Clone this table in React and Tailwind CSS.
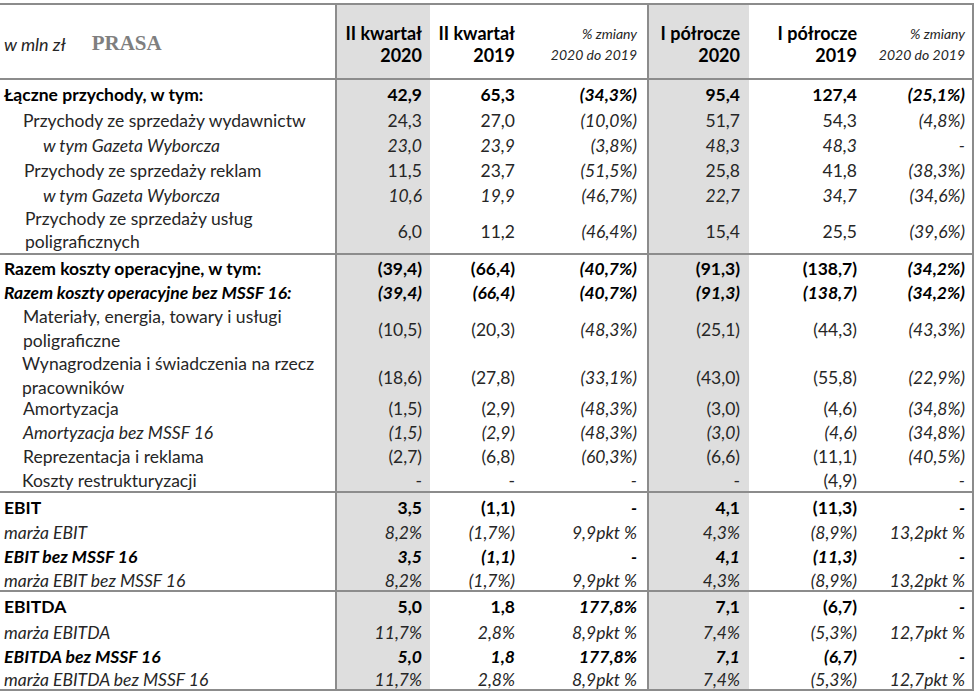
const COLS = 'grid grid-cols-[335px_95px_93px_124px_102px_116px_107px]';

// s: b = bold, bi = bold italic, n = normal, i = italic
const sections = [
  {
    rows: [
      { label: 'Łączne przychody, w tym:', s: 'b', pad: 'pl-[4px]', h: 'h-[26px]', v: ['42,9', '65,3', '(34,3%)', '95,4', '127,4', '(25,1%)'] },
      { label: 'Przychody ze sprzedaży wydawnictw', s: 'n', pad: 'pl-[23px]', h: 'h-[25px]', v: ['24,3', '27,0', '(10,0%)', '51,7', '54,3', '(4,8%)'] },
      { label: 'w tym Gazeta Wyborcza', s: 'i', pad: 'pl-[43px]', h: 'h-[26px]', v: ['23,0', '23,9', '(3,8%)', '48,3', '48,3', '-'] },
      { label: 'Przychody ze sprzedaży reklam', s: 'n', pad: 'pl-[24px]', h: 'h-[24px]', v: ['11,5', '23,7', '(51,5%)', '25,8', '41,8', '(38,3%)'] },
      { label: 'w tym Gazeta Wyborcza', s: 'i', pad: 'pl-[43px]', h: 'h-[25px]', v: ['10,6', '19,9', '(46,7%)', '22,7', '34,7', '(34,6%)'] },
      { label: ['Przychody ze sprzedaży usług', 'poligraficznych'], lh: 'leading-[23px] pt-[1px]', s: 'n', pad: 'pl-[25px]', h: 'h-[47px]', v: ['6,0', '11,2', '(46,4%)', '15,4', '25,5', '(39,6%)'] },
    ],
  },
  {
    rows: [
      { label: 'Razem koszty operacyjne, w tym:', s: 'b', pad: 'pl-[4px]', h: 'h-[24px]', v: ['(39,4)', '(66,4)', '(40,7%)', '(91,3)', '(138,7)', '(34,2%)'] },
      { label: 'Razem koszty operacyjne bez MSSF 16:', s: 'bi', pad: 'pl-[4px]', h: 'h-[24px]', v: ['(39,4)', '(66,4)', '(40,7%)', '(91,3)', '(138,7)', '(34,2%)'] },
      { label: ['Materiały, energia, towary i usługi', 'poligraficzne'], lh: 'leading-[24px] pt-[2px]', s: 'n', pad: 'pl-[23px]', h: 'h-[49px]', v: ['(10,5)', '(20,3)', '(48,3%)', '(25,1)', '(44,3)', '(43,3%)'] },
      { label: ['Wynagrodzenia i świadczenia na rzecz', 'pracowników'], lh: 'leading-[24px]', s: 'n', pad: 'pl-[22px]', h: 'h-[43px]', v: ['(18,6)', '(27,8)', '(33,1%)', '(43,0)', '(55,8)', '(22,9%)'] },
      { label: 'Amortyzacja', s: 'n', pad: 'pl-[23px]', h: 'h-[24px]', v: ['(1,5)', '(2,9)', '(48,3%)', '(3,0)', '(4,6)', '(34,8%)'] },
      { label: 'Amortyzacja bez MSSF 16', s: 'i', pad: 'pl-[23px]', h: 'h-[24px]', v: ['(1,5)', '(2,9)', '(48,3%)', '(3,0)', '(4,6)', '(34,8%)'] },
      { label: 'Reprezentacja i reklama', s: 'n', pad: 'pl-[23px]', h: 'h-[24px]', v: ['(2,7)', '(6,8)', '(60,3%)', '(6,6)', '(11,1)', '(40,5%)'] },
      { label: 'Koszty restrukturyzacji', s: 'n', pad: 'pl-[22px]', h: 'h-[24px]', v: ['-', '-', '-', '-', '(4,9)', '-'] },
    ],
  },
  {
    rows: [
      { label: 'EBIT', s: 'b', pad: 'pl-[4px]', h: 'h-[25px]', v: ['3,5', '(1,1)', '-', '4,1', '(11,3)', '-'] },
      { label: 'marża EBIT', s: 'i', pad: 'pl-[4px]', h: 'h-[25px]', v: ['8,2%', '(1,7%)', '9,9pkt %', '4,3%', '(8,9%)', '13,2pkt %'] },
      { label: 'EBIT bez MSSF 16', s: 'bi', pad: 'pl-[4px]', h: 'h-[24px]', v: ['3,5', '(1,1)', '-', '4,1', '(11,3)', '-'] },
      { label: 'marża EBIT bez MSSF 16', s: 'i', pad: 'pl-[4px]', h: 'h-[23px]', v: ['8,2%', '(1,7%)', '9,9pkt %', '4,3%', '(8,9%)', '13,2pkt %'] },
    ],
  },
  {
    rows: [
      { label: 'EBITDA', s: 'b', pad: 'pl-[4px]', h: 'h-[26px]', v: ['5,0', '1,8', '177,8%', '7,1', '(6,7)', '-'] },
      { label: 'marża EBITDA', s: 'i', pad: 'pl-[4px]', h: 'h-[25px]', v: ['11,7%', '2,8%', '8,9pkt %', '7,4%', '(5,3%)', '12,7pkt %'] },
      { label: 'EBITDA bez MSSF 16', s: 'bi', pad: 'pl-[4px]', h: 'h-[24px]', v: ['5,0', '1,8', '177,8%', '7,1', '(6,7)', '-'] },
      { label: 'marża EBITDA bez MSSF 16', s: 'i', pad: 'pl-[4px]', h: 'h-[22px]', v: ['11,7%', '2,8%', '8,9pkt %', '7,4%', '(5,3%)', '12,7pkt %'] },
    ],
  },
];

const styleCls = {
  b: 'font-bold text-black',
  bi: 'font-bold italic text-black',
  n: 'text-[#262626]',
  i: 'italic text-[#262626]',
};

// percentage columns (2 and 5) are always italic
const valueCls = (s, i) => {
  const pct = i === 2 || i === 5;
  if (s === 'b') return pct ? styleCls.bi : styleCls.b;
  if (s === 'n') return pct ? styleCls.i : styleCls.n;
  return styleCls[s];
};

const cellCls = [
  'bg-[#dedede] border-l-2 border-[#8c8c8c] pr-[8px]',
  'pr-[8px]',
  'pr-[10px]',
  'bg-[#dedede] border-l-2 border-[#8c8c8c] pr-[9px]',
  'pr-[8px]',
  'pr-[7px]',
];

const Row = ({ row }) => (
  <div className={`${COLS} ${row.h}`}>
    <div
      className={`flex flex-col justify-center whitespace-nowrap ${row.lh || 'leading-[18px] pt-[4px]'} ${row.pad} ${
        styleCls[row.s]
      }`}
    >
      {Array.isArray(row.label) ? row.label.map((l) => <span key={l}>{l}</span>) : <span>{row.label}</span>}
    </div>
    {row.v.map((val, i) => (
      <div
        key={i}
        className={`flex items-center justify-end leading-[18px] pt-[4px] whitespace-nowrap ${cellCls[i]} ${valueCls(row.s, i)}`}
      >
        {val}
      </div>
    ))}
  </div>
);

const HeadCell = ({ cls, top, bottom, pct }) => (
  <div
    className={`flex flex-col items-end justify-center pt-[4px] whitespace-nowrap ${cls} ${
      pct ? 'italic text-[14px] text-[#262626] leading-[21px]' : 'font-bold text-[18px] text-black leading-[22px]'
    }`}
  >
    <span>{top}</span>
    <span>{bottom}</span>
  </div>
);

export default function App() {
  return (
    <div className="w-[975px] h-[695px] bg-white pt-[3px] text-[17.5px] font-['Lato',sans-serif]">
      <div className="w-[974px] border-t-2 border-r-2 border-[#8c8c8c]">
        {/* header */}
        <div className={`${COLS} h-[75px] border-b-2 border-[#8c8c8c]`}>
          <div className="flex items-center pl-[4px] pt-[5px]">
            <span className="italic text-[18px] text-[#262626]">w mln zł</span>
            <span className="ml-[26px] text-[21px] font-bold text-[#7f7f7f] font-['Liberation_Serif',serif]">PRASA</span>
          </div>
          <HeadCell cls="bg-[#dedede] border-l-2 border-[#8c8c8c] pr-[8px]" top="II kwartał" bottom="2020" />
          <HeadCell cls="pr-[8px]" top="II kwartał" bottom="2019" />
          <HeadCell cls="pr-[10px]" top="% zmiany" bottom="2020 do 2019" pct />
          <HeadCell cls="bg-[#dedede] border-l-2 border-[#8c8c8c] pr-[9px]" top="I półrocze" bottom="2020" />
          <HeadCell cls="pr-[8px]" top="I półrocze" bottom="2019" />
          <HeadCell cls="pr-[7px]" top="% zmiany" bottom="2020 do 2019" pct />
        </div>
        {sections.map((sec, si) => (
          <div key={si} className="border-b-2 border-[#8c8c8c]">
            {sec.rows.map((row, ri) => (
              <Row key={ri} row={row} />
            ))}
          </div>
        ))}
      </div>
    </div>
  );
}
